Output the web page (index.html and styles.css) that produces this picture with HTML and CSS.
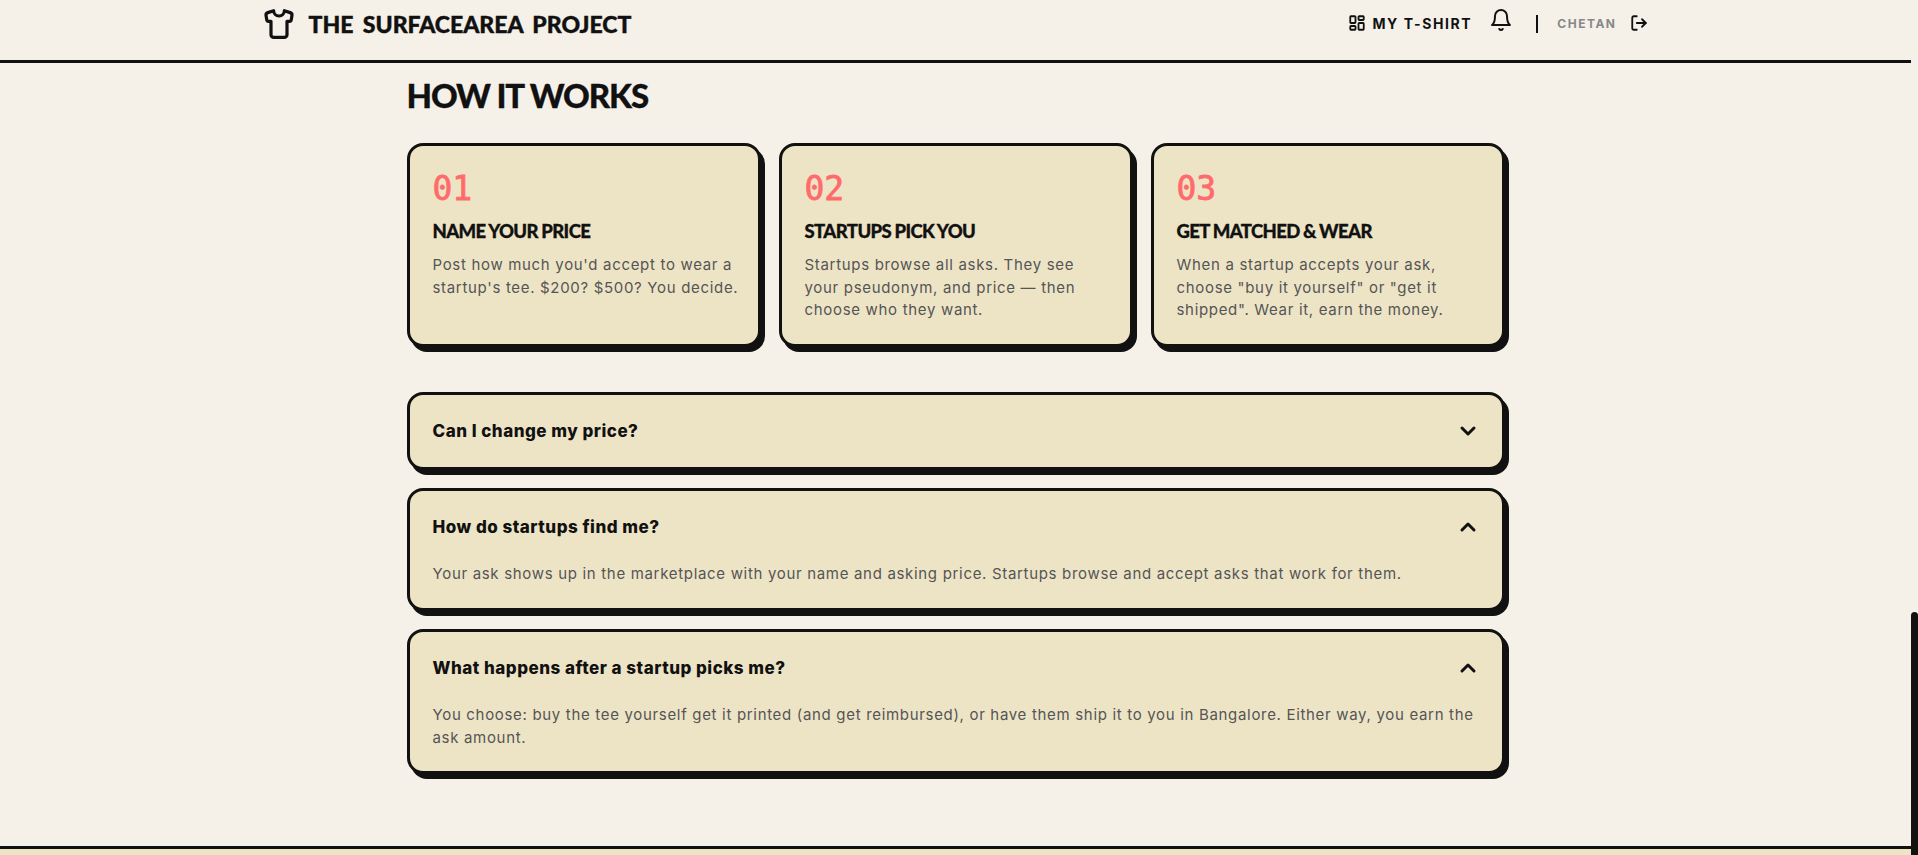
FILE: index.html
```html
<!DOCTYPE html>
<html lang="en">
<head>
<meta charset="utf-8">
<title>How it works</title>
<link rel="stylesheet" href="styles.css">
</head>
<body>
<div class="page">
  <header class="topbar">
    <div class="topbar-inner">
      <a class="brand">
        <svg class="brand-icon" viewBox="0 0 24 24" fill="none" stroke="currentColor" stroke-width="2.4" stroke-linecap="round" stroke-linejoin="round"><path d="M20.38 3.46 16 2a4 4 0 0 1-8 0L3.62 3.46a2 2 0 0 0-1.34 2.23l.58 3.47a1 1 0 0 0 .99.84H6v10c0 1.1.9 2 2 2h8a2 2 0 0 0 2-2V10h2.15a1 1 0 0 0 .99-.84l.58-3.47a2 2 0 0 0-1.34-2.23z"/></svg>
        <span class="brand-name">THE SURFACEAREA PROJECT</span>
      </a>
      <nav class="nav">
        <a class="nav-link">
          <svg class="nav-icon" viewBox="0 0 24 24" fill="none" stroke="currentColor" stroke-width="2.4" stroke-linecap="round" stroke-linejoin="round"><rect x="3" y="3" width="7" height="9" rx="1"/><rect x="14" y="3" width="7" height="5" rx="1"/><rect x="14" y="12" width="7" height="9" rx="1"/><rect x="3" y="16" width="7" height="5" rx="1"/></svg>
          <span>MY T-SHIRT</span>
        </a>
        <svg class="bell" viewBox="0 0 24 24" fill="none" stroke="currentColor" stroke-width="2" stroke-linecap="round" stroke-linejoin="round"><path d="M6 8a6 6 0 0 1 12 0c0 7 3 9 3 9H3s3-2 3-9"/><path d="M10.3 21a1.94 1.94 0 0 0 3.4 0"/></svg>
        <span class="divider"></span>
        <span class="user">CHETAN</span>
        <svg class="nav-icon logout" viewBox="0 0 24 24" fill="none" stroke="currentColor" stroke-width="2.4" stroke-linecap="round" stroke-linejoin="round"><path d="M9 21H5a2 2 0 0 1-2-2V5a2 2 0 0 1 2-2h4"/><polyline points="16 17 21 12 16 7"/><line x1="21" y1="12" x2="9" y2="12"/></svg>
      </nav>
    </div>
  </header>

  <main class="main">
    <h1 class="title">HOW IT WORKS</h1>
    <section class="steps">
      <article class="card">
        <div class="num">01</div>
        <h3 class="step-title">NAME YOUR PRICE</h3>
        <p class="copy">Post how much you'd accept to wear a startup's tee. $200? $500? You decide.</p>
      </article>
      <article class="card">
        <div class="num">02</div>
        <h3 class="step-title">STARTUPS PICK YOU</h3>
        <p class="copy">Startups browse all asks. They see your pseudonym, and price — then choose who they want.</p>
      </article>
      <article class="card">
        <div class="num">03</div>
        <h3 class="step-title">GET MATCHED &amp; WEAR</h3>
        <p class="copy">When a startup accepts your ask, choose "buy it yourself" or "get it shipped". Wear it, earn the money.</p>
      </article>
    </section>
    <section class="faq">
      <div class="card faq-item">
        <div class="faq-head">
          <span class="question">Can I change my price?</span>
          <svg class="chev" viewBox="0 0 24 24" fill="none" stroke="currentColor" stroke-width="3" stroke-linecap="round" stroke-linejoin="round"><path d="m6 9 6 6 6-6"/></svg>
        </div>
      </div>
      <div class="card faq-item">
        <div class="faq-head">
          <span class="question">How do startups find me?</span>
          <svg class="chev" viewBox="0 0 24 24" fill="none" stroke="currentColor" stroke-width="3" stroke-linecap="round" stroke-linejoin="round"><path d="m18 15-6-6-6 6"/></svg>
        </div>
        <p class="copy answer">Your ask shows up in the marketplace with your name and asking price. Startups browse and accept asks that work for them.</p>
      </div>
      <div class="card faq-item">
        <div class="faq-head">
          <span class="question">What happens after a startup picks me?</span>
          <svg class="chev" viewBox="0 0 24 24" fill="none" stroke="currentColor" stroke-width="3" stroke-linecap="round" stroke-linejoin="round"><path d="m18 15-6-6-6 6"/></svg>
        </div>
        <p class="copy answer">You choose: buy the tee yourself get it printed (and get reimbursed), or have them ship it to you in Bangalore. Either way, you earn the ask amount.</p>
      </div>
    </section>
  </main>
  <footer class="footer"></footer>
</div>
<div class="scroll-thumb"></div>
</body>
</html>
```
FILE: styles.css
```css
* { box-sizing: border-box; }
html, body { margin: 0; height: 855px; overflow: hidden; }
body { background: #f5f0e8; color: #111; font-family: Inter, sans-serif; position: relative; }
.page { width: 1911px; }
.topbar { height: 63px; border-bottom: 3px solid #111; }
.topbar-inner { width: 1384px; height: 60px; margin: 0 auto; padding-top: 8px; display: flex; justify-content: space-between; align-items: flex-start; }
.brand { display: flex; align-items: center; gap: 14px; height: 32px; }
.brand-icon { width: 32px; height: 32px; margin-left: -1px; }
.brand-name { font-family: Lato, sans-serif; font-weight: 900; font-size: 23px; word-spacing: 4px; -webkit-text-stroke: 0.4px #111; }
.nav { display: flex; align-items: center; height: 32px; margin-top: -1px; }
.nav-link { display: flex; align-items: center; gap: 6px; font-family: Inter, sans-serif; font-weight: 700; font-size: 14px; letter-spacing: 1.6px; }
.nav-icon { width: 18px; height: 18px; }
.bell { width: 24px; height: 24px; margin: -6px 0 0 17px; }
.divider { width: 2px; height: 18px; background: #111; margin: 1px 0 0 23px; }
.user { font-family: Inter, sans-serif; font-weight: 700; font-size: 12px; letter-spacing: 1.5px; color: #888; margin: 1px 0 0 19px; }
.logout { margin: 0 0 0 13px; }
.main { width: 1098px; margin: 0 auto; padding-top: 12px; }
.title { margin: 0 0 28px; font-family: Lato, sans-serif; font-weight: 900; font-size: 33px; line-height: 40px; letter-spacing: -1.1px; -webkit-text-stroke: 0.3px #111; }
.steps { display: grid; grid-template-columns: repeat(3, 354px); gap: 18px; }
.card { background: #ede4c6; border: 3px solid #111; border-radius: 16px; box-shadow: 4px 5px 0 #111; padding: 22px 22px 22px 23px; }
.num { font-family: "DejaVu Sans Mono", monospace; font-weight: 400; font-size: 33px; line-height: 40px; color: #ff6b6b; -webkit-text-stroke: 0.8px #ff6b6b; position: relative; top: 1px; }
.step-title { margin: 11px 0 11px; font-family: Lato, sans-serif; font-weight: 900; font-size: 18.5px; line-height: 24px; letter-spacing: -0.6px; word-spacing: -0.5px; -webkit-text-stroke: 0.3px #111; }
.copy { margin: 0; font-family: Inter, sans-serif; font-size: 15px; line-height: 22.5px; color: #555; letter-spacing: 0.68px; }
.steps .copy { margin-right: -3px; }
.faq { display: flex; flex-direction: column; gap: 18px; margin-top: 45px; }
.faq-head { display: flex; justify-content: space-between; align-items: center; height: 28px; }
.question { font-family: Inter, sans-serif; font-weight: 800; font-size: 17px; letter-spacing: 0.5px; color: #111; }
.chev { width: 24px; height: 24px; }
.answer { margin-top: 22.5px; }
.footer { margin-top: 72px; height: 12px; background: #ede4c6; border-top: 3px solid #111; }
.scroll-thumb { position: absolute; right: 0; top: 612px; width: 7px; height: 243px; background: #111; border-radius: 4px 4px 0 0; }
```
